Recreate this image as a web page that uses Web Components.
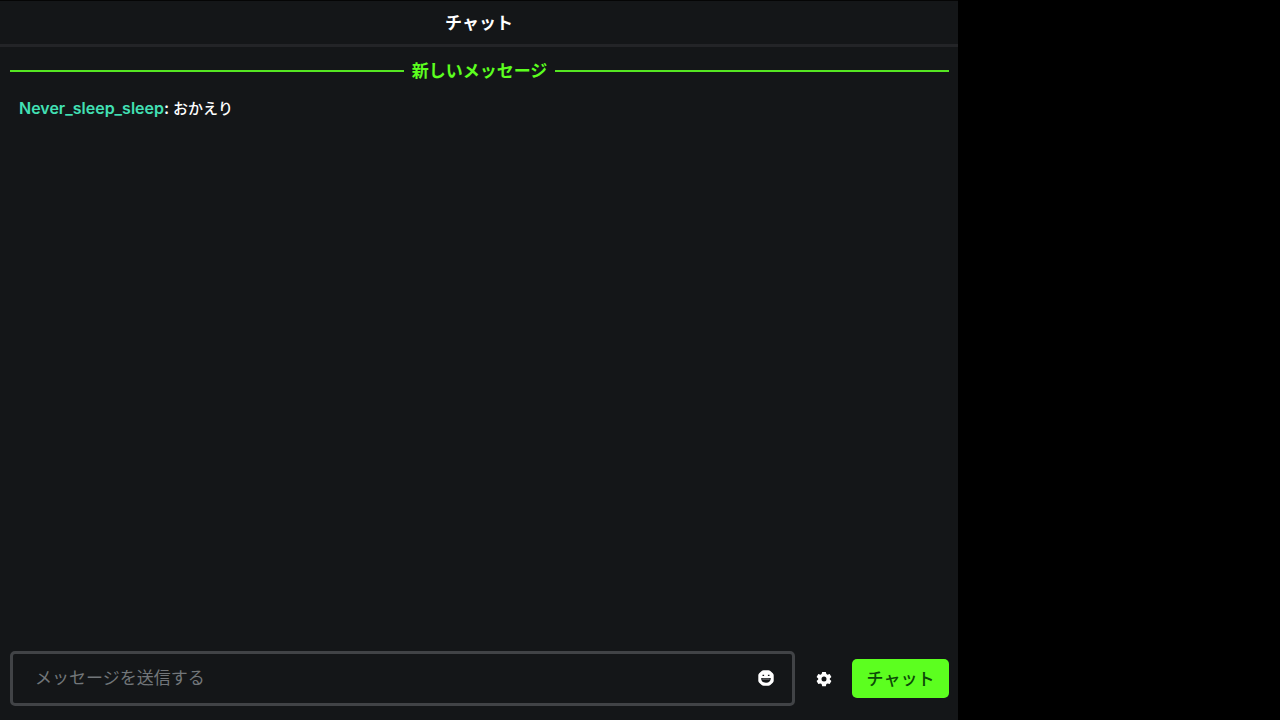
<!DOCTYPE html>
<html lang="ja">
<head>
<meta charset="utf-8">
<title>チャット</title>
<style>
  html, body { height: 100%; }
  body {
    margin: 0;
    background: #000;
    color: #fff;
    font-family: Inter, "Noto Sans CJK JP", sans-serif;
    font-size: 16px;
  }
</style>
</head>
<body>
<chat-app>
  <chat-header slot="header">チャット</chat-header>
  <new-divider>新しいメッセージ</new-divider>
  <chat-message author="Never_sleep_sleep">おかえり</chat-message>
  <chat-composer slot="footer"></chat-composer>
</chat-app>
<script>
  class BaseElement extends HTMLElement {
    constructor() {
      super();
      this.attachShadow({ mode: 'open' }).innerHTML = this.constructor.markup;
    }
  }

  customElements.define('chat-app', class extends BaseElement {
    static markup = `
      <style>
        :host {
          display: grid;
          grid-template-columns: minmax(0, 1fr) 322px;
          min-height: 100vh;
        }
        section {
          display: flex;
          flex-direction: column;
          background: #141618;
          border-top: 1px solid #050505;
        }
        main { flex: 1; padding: 12px 9px 12px 10px; }
      </style>
      <section>
        <slot name="header"></slot>
        <main><slot></slot></main>
        <slot name="footer"></slot>
      </section>`;
  });

  customElements.define('chat-header', class extends BaseElement {
    static markup = `
      <style>
        :host { display: block; border-bottom: 3px solid #232427; }
        h1 {
          margin: 0;
          padding-top: 1px;
          font-size: 17px;
          line-height: 42px;
          font-weight: 700;
          text-align: center;
        }
      </style>
      <h1><slot></slot></h1>`;
  });

  customElements.define('new-divider', class extends BaseElement {
    static markup = `
      <style>
        :host {
          display: flex;
          align-items: center;
          gap: 8px;
          color: #5cff1f;
          font-size: 17px;
          line-height: 24px;
          font-weight: 700;
        }
        :host::before, :host::after {
          content: "";
          flex: 1;
          height: 2px;
          background: #55e622;
        }
      </style>
      <slot></slot>`;
  });

  customElements.define('chat-message', class extends BaseElement {
    static markup = `
      <style>
        :host { display: block; padding: 13px 9px; line-height: 24px; font-weight: 500; font-size: 15px; }
        p { margin: 0; }
        b { font-weight: 600; font-size: 16px; }
        .name { color: #42e0b4; }
      </style>
      <p><b><span class="name"></span>:</b> <slot></slot></p>`;
    connectedCallback() {
      this.shadowRoot.querySelector('.name').textContent = this.getAttribute('author');
    }
  });

  customElements.define('icon-button', class extends BaseElement {
    static markup = `
      <style>
        :host { display: block; }
        button {
          display: grid;
          place-items: center;
          width: 38px;
          height: 38px;
          padding: 0;
          border: 0;
          background: none;
          color: #fff;
          cursor: pointer;
        }
      </style>
      <button type="button"><slot></slot></button>`;
    connectedCallback() {
      this.shadowRoot.querySelector('button').setAttribute('aria-label', this.getAttribute('label'));
    }
  });

  customElements.define('chat-composer', class extends BaseElement {
    static markup = `
      <style>
        :host { display: block; padding: 0 9px 14px 10px; }
        form { display: flex; align-items: center; margin: 0; }
        .field {
          flex: 1;
          display: flex;
          align-items: center;
          box-sizing: border-box;
          height: 55px;
          padding: 0 7px 1px 22px;
          border: 3px solid #414346;
          border-radius: 5px;
        }
        input {
          flex: 1;
          min-width: 0;
          padding: 0;
          border: 0;
          outline: 0;
          background: none;
          color: #fff;
          font: inherit;
          font-size: 17px;
          line-height: 24px;
        }
        input::placeholder { color: #72767a; opacity: 1; }
        .settings { margin: 0 9px 0 10px; }
        .send {
          width: 97px;
          height: 39px;
          padding: 0 0 2px;
          border: 0;
          border-radius: 5px;
          background: #5cff1f;
          color: #0c4a08;
          font: inherit;
          font-size: 17px;
          font-weight: 500;
          cursor: pointer;
        }
        svg { display: block; }
      </style>
      <form>
        <div class="field">
          <input type="text" aria-label="メッセージを送信する" placeholder="メッセージを送信する">
          <icon-button label="絵文字">
            <svg width="16" height="16" viewBox="0 0 16 16" aria-hidden="true">
              <path fill="currentColor" fill-rule="evenodd" d="M5.500.3h5Q11.500.3 12.300 1l2.500 2.300q.9.800.9 1.900v5.600q0 1.100-.9 1.900L12.300 15q-.8.7-1.800.7h-5q-1 0-1.800-.7l-2.500-2.300q-.9-.8-.9-1.900V5.200q0-1.100.9-1.900L3.700 1Q4.500.3 5.500.3ZM4.500 4.800v1.300h1.600V4.800ZM9.900 4.800v1.300h1.600V4.800ZM3.200 8c0 3.200 1.700 4.800 4.800 4.800s4.800-1.600 4.800-4.800Z"/>
              <path fill="currentColor" fill-opacity=".4" d="M4.400 8.500h7.200v1.200H4.400Z"/>
            </svg>
          </icon-button>
        </div>
        <icon-button class="settings" label="設定">
          <svg width="16" height="16" viewBox="0 0 16 16" aria-hidden="true">
            <path fill="currentColor" fill-rule="evenodd" d="M6.200.9h3.600l.6 2.100 1.100.7 2.200-.6 1.700 3L13.800 7.500v1l1.600 1.500-1.700 3-2.200-.6-1.100.7-.6 2.100H6.200l-.6-2.100-1.100-.7-2.200.6-1.700-3 1.600-1.500v-1L.6 6.100l1.700-3 2.200.6L5.600 3ZM8 5.500a2.500 2.500 0 1 0 0 5a2.500 2.500 0 1 0 0-5Z"/>
          </svg>
        </icon-button>
        <button class="send" type="submit">チャット</button>
      </form>`;
  });
</script>
</body>
</html>
